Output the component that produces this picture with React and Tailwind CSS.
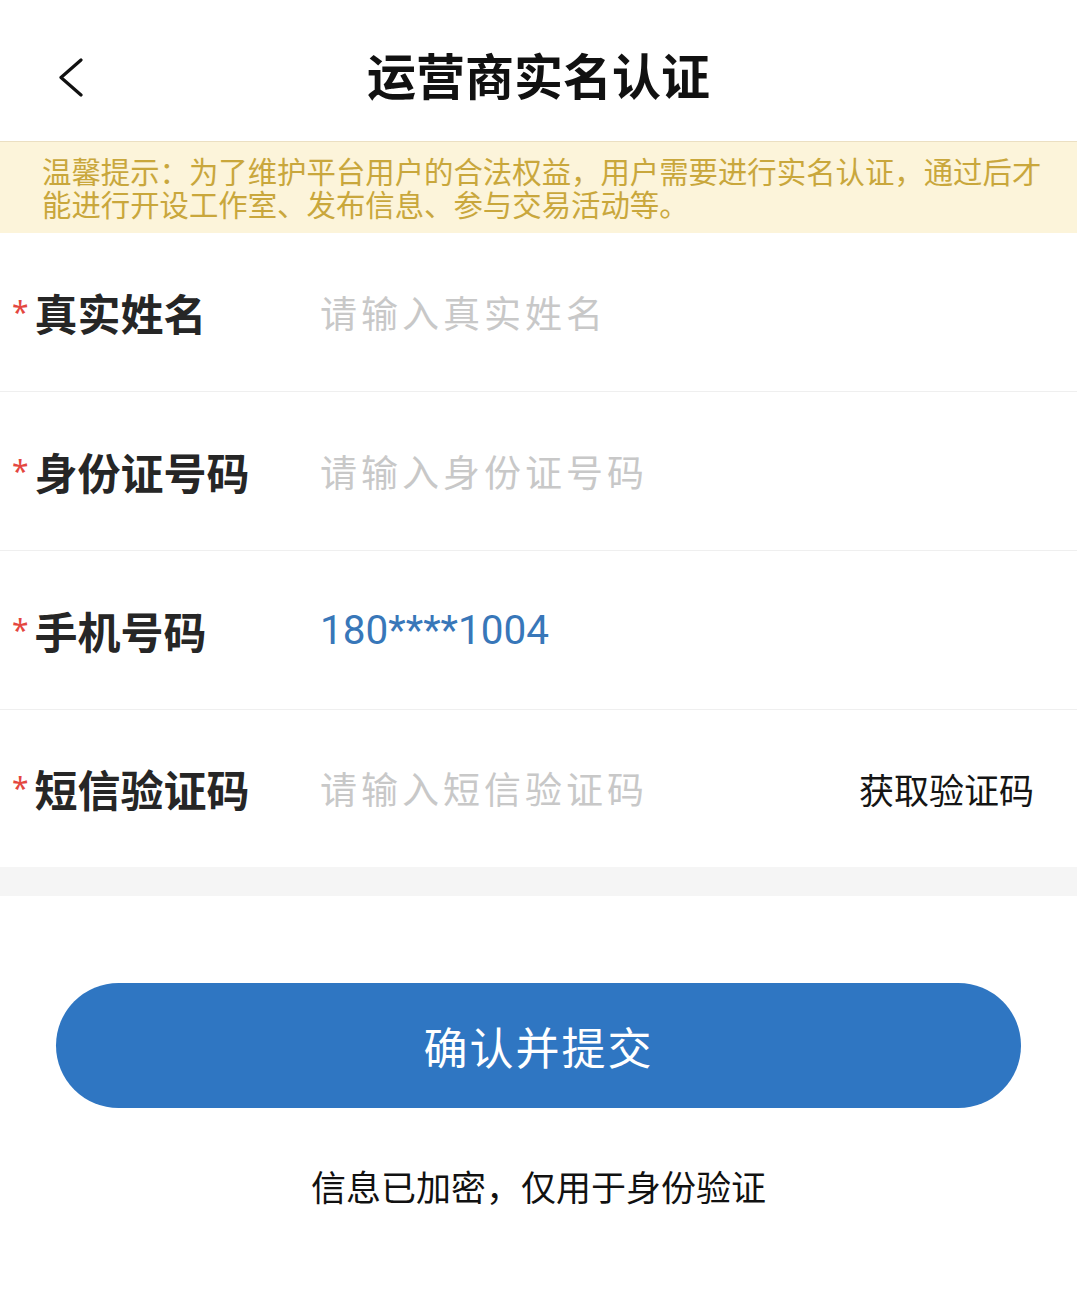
import React from 'react';

const FONT = { fontFamily: '"Noto Sans CJK SC", "Noto Sans", sans-serif' };

const rows = [
  { label: '真实姓名', placeholder: '请输入真实姓名' },
  { label: '身份证号码', placeholder: '请输入身份证号码' },
  { label: '手机号码', value: '180****1004' },
  { label: '短信验证码', placeholder: '请输入短信验证码', action: '获取验证码' },
];

const BackIcon = () => (
  <svg width="26" height="40" viewBox="0 0 26 40" fill="none">
    <path d="M23 2 L3 19.5 L23 37" stroke="#111" strokeWidth="3.2" strokeLinecap="round" strokeLinejoin="round" />
  </svg>
);

const FormRow = ({ row, last }) => (
  <div className={`flex items-center ${last ? 'h-[157px]' : 'h-[159px] border-b border-[#efefef]'}`}>
    <div className="w-[320px] shrink-0 flex items-center pl-[12px]">
      <span className="self-start mt-[6px] text-[30px] leading-none text-[#e4473f]" style={{ fontFamily: '"Noto Sans", sans-serif' }}>*</span>
      <span className="text-[43px] font-bold text-[#262626] leading-none ml-[6px]">{row.label}</span>
    </div>
    <div className="flex-1 flex items-center">
      {row.value ? (
        <span className="text-[40.5px] text-[#3877b9] leading-none" style={{ fontFamily: 'Roboto, sans-serif' }}>{row.value}</span>
      ) : (
        <span className="text-[37px] tracking-[4px] text-[#c8c8c8] leading-none">{row.placeholder}</span>
      )}
    </div>
    {row.action && (
      <span className="text-[35px] text-[#151515] leading-none pr-[43px]">{row.action}</span>
    )}
  </div>
);

export default function App() {
  return (
    <div className="w-[1077px] h-[1295px] bg-white overflow-hidden" style={FONT}>
      <div className="h-[141px] grid grid-cols-[1fr_auto_1fr] items-center">
        <div className="pl-[58px] pt-[14px]">
          <BackIcon />
        </div>
        <h1 className="text-[49px] font-bold text-[#111] leading-none pt-[6px]">运营商实名认证</h1>
        <div />
      </div>

      <div className="h-[92px] bg-[#fcf4da] border-t border-[#ebdfc2] pl-[42px] pt-[12px]">
        <p className="whitespace-nowrap text-[29.4px] leading-[33px] text-[#c9a73c]">
          温馨提示：为了维护平台用户的合法权益，用户需要进行实名认证，通过后才<br />
          能进行开设工作室、发布信息、参与交易活动等。
        </p>
      </div>

      <div>
        {rows.map((row, i) => (
          <FormRow key={row.label} row={row} last={i === rows.length - 1} />
        ))}
      </div>

      <div className="h-[29px] bg-[#f5f5f5]" />

      <div className="px-[56px] pt-[87px]">
        <button className="w-full h-[125px] rounded-full bg-[#2f76c2] text-white text-[44px] tracking-[2px] leading-none">
          确认并提交
        </button>
      </div>

      <p className="mt-[60px] text-center text-[35px] text-[#111] leading-none">信息已加密，仅用于身份验证</p>
    </div>
  );
}
